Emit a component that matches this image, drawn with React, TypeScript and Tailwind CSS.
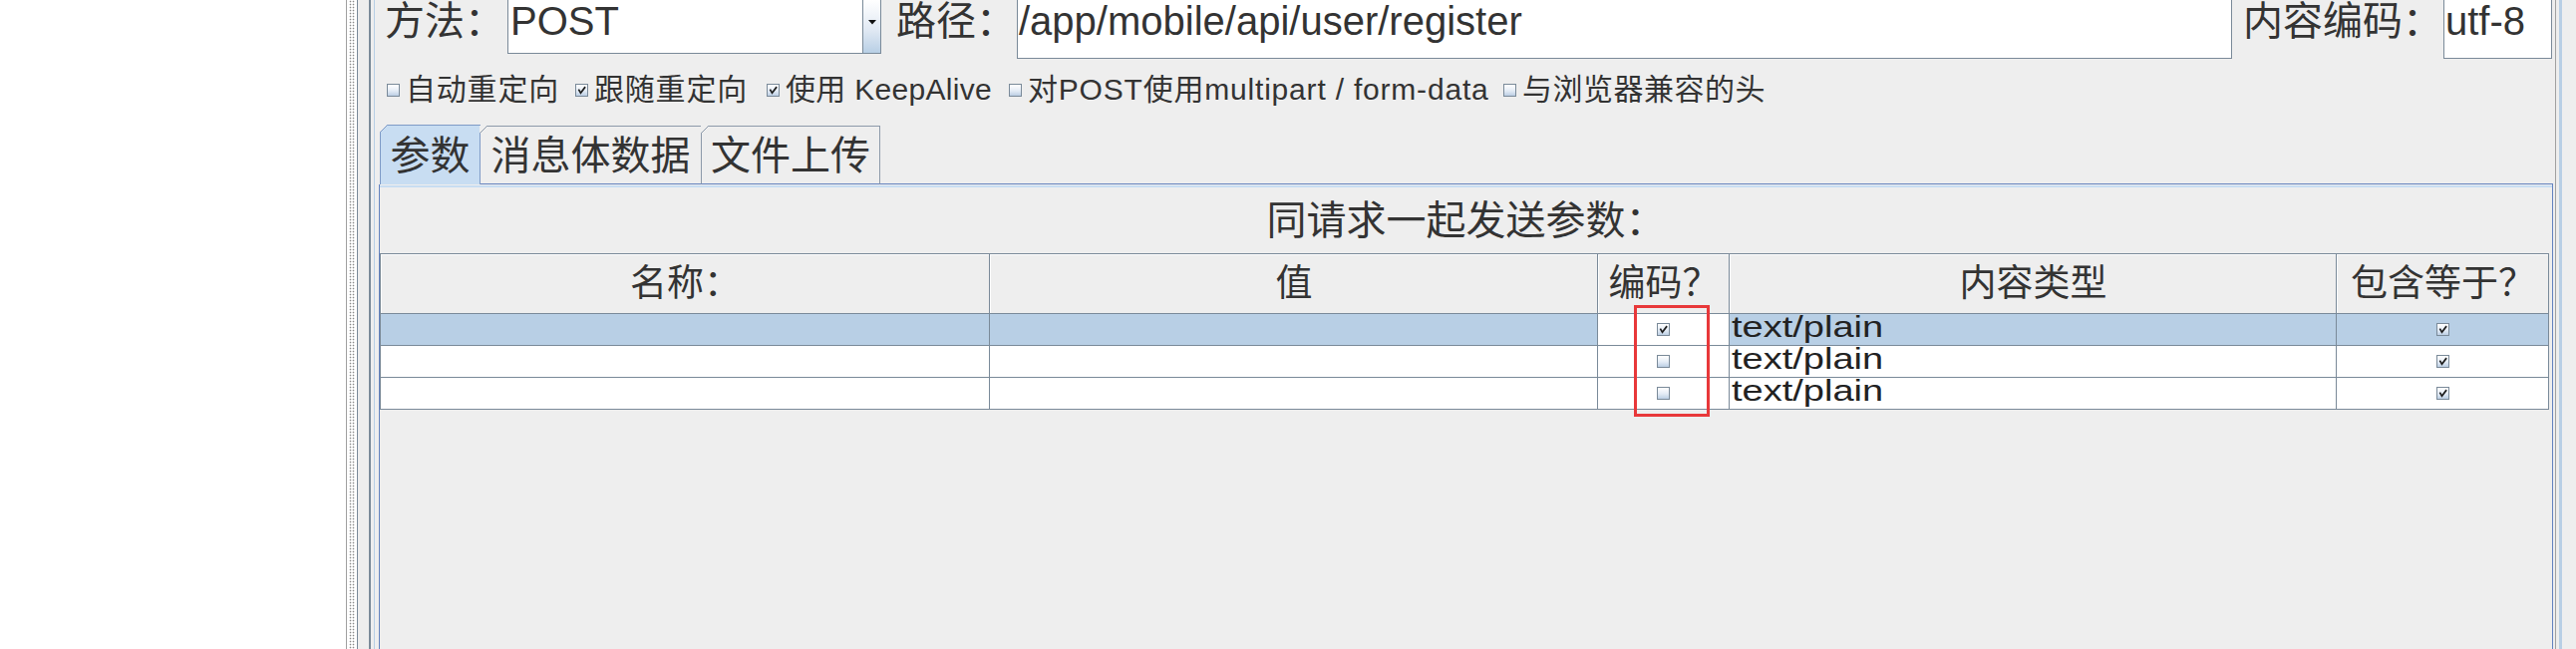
import React from "react";

function Box({ checked }: { checked: boolean }) {
  return (
    <span className="relative block h-[13px] w-[13px] shrink-0 border border-[#7a8a99] bg-[linear-gradient(180deg,#ffffff_0%,#e4ecf6_55%,#bccfe4_100%)]">
      {checked && (
        <svg viewBox="0 0 11 11" className="absolute left-0 top-0 h-[11px] w-[11px]">
          <path d="M2.8 5.4 L4.5 8.2 L8.6 2.8" stroke="#1e1e1e" strokeWidth="1.7" fill="none" strokeLinecap="square" />
        </svg>
      )}
    </span>
  );
}

function Corner({ color }: { color: string }) {
  return (
    <svg viewBox="0 0 8 8" className="absolute -left-px -top-px h-[8px] w-[8px]">
      <polygon points="0,0 7.5,0 0,7.5" fill="#eeeeee" />
      <line x1="0.5" y1="7.5" x2="7.5" y2="0.5" stroke={color} strokeWidth="1" />
    </svg>
  );
}

function Opt({ checked, label, w, track }: { checked: boolean; label: string; w: string; track: string }) {
  return (
    <div className="flex shrink-0 items-center gap-[6px]">
      <Box checked={checked} />
      <span className={`${w} ${track} shrink-0 whitespace-nowrap`}>{label}</span>
    </div>
  );
}

export default function App() {
  return (
    <div className="relative flex h-[651px] w-[2584px] overflow-hidden bg-white font-['Liberation_Sans','Noto_Sans_CJK_SC',sans-serif] text-[#333333]">
      {/* left blank area */}
      <div className="w-[347px] shrink-0 bg-white" />
      {/* splitter decorations */}
      <div className="w-px shrink-0 bg-[#a0a0a0]" />
      <div className="w-[10px] shrink-0 bg-white px-[2px]">
        <div className="h-full w-full bg-[radial-gradient(circle,#8c8c8c_0.7px,transparent_1.1px)] bg-[length:3px_3px]" />
      </div>
      <div className="w-px shrink-0 bg-[#7a8a99]" />
      <div className="w-[11px] shrink-0 bg-[#eeeeee]" />
      <div className="w-[2px] shrink-0 bg-[#7a8a99]" />
      <div className="w-[3px] shrink-0 bg-[#eeeeee]" />
      <div className="w-px shrink-0 bg-[#b8cfe5]" />

      {/* main panel */}
      <div className="flex w-[2185px] shrink-0 flex-col bg-[#eeeeee]">
        {/* top row */}
        <div className="flex h-[59px] shrink-0 pl-[9px] text-[40px] leading-[42px]">
          <div className="w-[124px] shrink-0 whitespace-nowrap pl-px">方法：</div>
          <div className="flex h-[54px] w-[375px] shrink-0 border-x border-b border-[#7a8a99] bg-white">
            <div className="flex-1 pl-[2px]">POST</div>
            <div className="flex w-[18px] shrink-0 justify-center border-l border-[#7a8a99] bg-[linear-gradient(180deg,#ffffff_0%,#e2eaf4_55%,#b8cfe5_100%)] pt-[20px]">
              <svg viewBox="0 0 8 5" className="h-[5px] w-[8px]">
                <polygon points="0,0 8,0 4,4.5" fill="#111111" />
              </svg>
            </div>
          </div>
          <div className="ml-[15px] w-[121px] shrink-0 whitespace-nowrap">路径：</div>
          <div className="w-[1219px] shrink-0 whitespace-nowrap border-x border-b border-[#7a8a99] bg-white pl-px">
            /app/mobile/api/user/register
          </div>
          <div className="ml-[11px] w-[201px] shrink-0 whitespace-nowrap">内容编码：</div>
          <div className="w-[109px] shrink-0 border-x border-b border-[#7a8a99] bg-white pl-px">utf-8</div>
        </div>

        {/* checkbox row */}
        <div className="mt-[14px] flex h-[34px] shrink-0 items-center gap-[16px] pl-[12px] text-[30px] leading-[34px]">
          <Opt checked={false} label="自动重定向" w="w-[154px]" track="tracking-[0.8px]" />
          <Opt checked={true} label="跟随重定向" w="w-[157px]" track="tracking-[0.8px]" />
          <Opt checked={true} label="使用 KeepAlive" w="w-[208px]" track="tracking-[0.3px]" />
          <Opt checked={false} label="对POST使用multipart / form-data" w="w-[461px]" track="tracking-[0.8px]" />
          <Opt checked={false} label="与浏览器兼容的头" w="w-[252px]" track="tracking-[0.5px]" />
        </div>

        {/* tabs */}
        <div className="mt-[18px] flex h-[60px] shrink-0 items-end pl-[5px] text-[40px] leading-[44px]">
          <div className="relative flex h-[60px] w-[101px] shrink-0 items-center justify-center border-x border-t border-[#7f9bc6] bg-[#c8ddf2]">
            <Corner color="#7f9bc6" />
            <span>参数</span>
          </div>
          <div className="relative flex h-[59px] w-[222px] shrink-0 items-center justify-center border-r border-t border-b border-[#8d9aaa] border-b-[#6382bf] pt-px">
            <Corner color="#8d9aaa" />
            <span>消息体数据</span>
          </div>
          <div className="relative flex h-[59px] w-[179px] shrink-0 items-center justify-center border-r border-t border-b border-[#8d9aaa] border-b-[#6382bf] pt-px">
            <Corner color="#8d9aaa" />
            <span>文件上传</span>
          </div>
          <div className="h-[60px] flex-1 border-b border-[#6382bf]" />
        </div>

        {/* tab content panel */}
        <div className="ml-[4px] flex flex-1 flex-col border-x border-[#6382bf]">
          <div className="h-px shrink-0 bg-[#eeeeee]" />
          <div className="h-[2px] shrink-0 bg-[#c8ddf2]" />
          <div className="flex h-[66px] shrink-0 items-center justify-center text-[40px] leading-[44px]">
            同请求一起发送参数：
          </div>

          {/* table */}
          <div className="grid w-[2176px] shrink-0 grid-cols-[610px_609px_131px_608px_212px] grid-rows-[59px_31px_31px_31px] gap-px border border-[#7a8a99] bg-[#7a8a99]">
            {["名称：", "值", "编码？", "内容类型", "包含等于？"].map((h) => (
              <div
                key={h}
                className="flex items-center justify-center whitespace-nowrap border-l border-t border-white bg-[#eeeeee] text-[37px] leading-[40px]"
              >
                {h}
              </div>
            ))}
            {[0, 1, 2].map((r) => {
              const bg = r === 0 ? "bg-[#b8cfe5]" : "bg-white";
              return (
                <React.Fragment key={r}>
                  <div className={bg} />
                  <div className={bg} />
                  <div className="flex items-center justify-center bg-white">
                    <Box checked={r === 0} />
                  </div>
                  <div className={`${bg} flex items-center overflow-visible pl-[2px]`}>
                    <span className="inline-block -translate-y-[2px] scale-y-[0.76] whitespace-nowrap text-[38px] leading-[31px] text-[#222222]">
                      text/plain
                    </span>
                  </div>
                  <div className={`${bg} flex items-center justify-center`}>
                    <Box checked={true} />
                  </div>
                </React.Fragment>
              );
            })}
          </div>
          <div className="flex-1" />
        </div>
      </div>

      {/* right decorations */}
      <div className="w-[2px] shrink-0 bg-[#eeeeee]" />
      <div className="w-px shrink-0 bg-[#a0a0a0]" />
      <div className="w-[3px] shrink-0 bg-[#eeeeee]" />
      <div className="w-[3px] shrink-0 bg-[#b8cfe5]" />
      <div className="flex-1 bg-[#eeeeee]" />

      {/* red annotation box */}
      <div className="pointer-events-none absolute left-[1639px] top-[306px] h-[112px] w-[76px] border-[3px] border-[#e8383a]" />
    </div>
  );
}
